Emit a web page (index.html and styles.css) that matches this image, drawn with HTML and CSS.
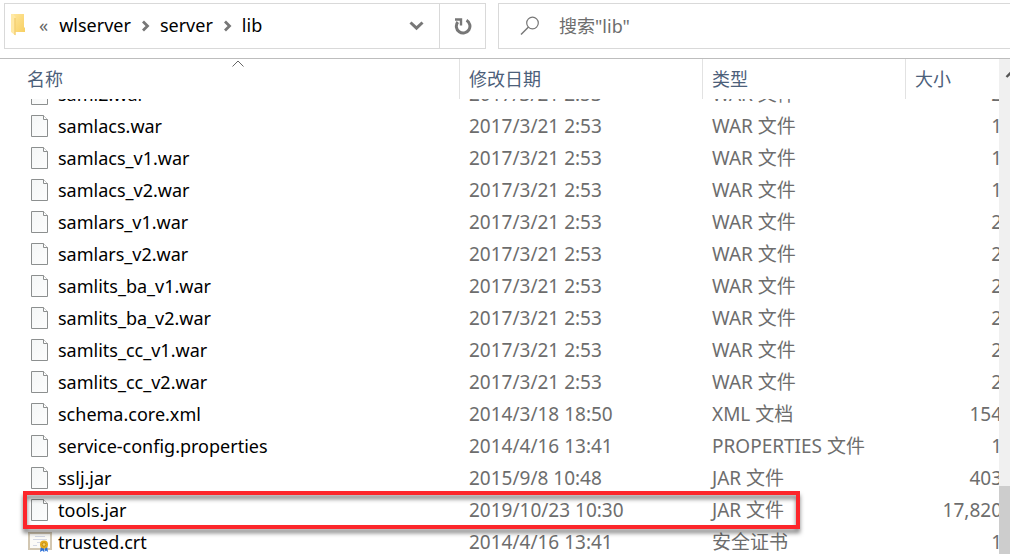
FILE: index.html
```html
<!DOCTYPE html>
<html lang="zh-CN">
<head>
  <meta charset="UTF-8" />
  <meta name="viewport" content="width=device-width, initial-scale=1.0"/>
  <title>lib</title>
  <link rel="stylesheet" href="styles.css">
</head>
<body>
  <!-- shared icons -->
  <svg class="defs" width="0" height="0">
    <defs>
      <linearGradient id="paper" x1="0" y1="0" x2="1" y2="1">
        <stop offset="0" stop-color="#f4f6f6"/>
        <stop offset="1" stop-color="#fdfdfd"/>
      </linearGradient>
      <linearGradient id="gold" x1="0" y1="0" x2="1" y2="1">
        <stop offset="0" stop-color="#ffe69b"/>
        <stop offset="1" stop-color="#f7cf62"/>
      </linearGradient>
    </defs>
    <symbol id="file" viewBox="0 0 17 22">
      <path d="M.5.5h12l4 4v17H.5z" fill="url(#paper)" stroke="#8c8f8f"/>
      <path d="M12.5.5v4h4" fill="#fff" stroke="#8c8f8f"/>
    </symbol>
    <symbol id="chevron" viewBox="0 0 9 12">
      <path d="M2 1.5 6.5 6 2 10.5" fill="none" stroke="#777" stroke-width="2.8"/>
    </symbol>
  </svg>

  <header class="toolbar">
    <div class="address">
      <nav class="crumbs">
        <svg class="folder" width="14" height="22" viewBox="0 0 14 22">
          <path d="M2 0h11v13l1 1v4H4z" fill="url(#gold)"/>
          <path d="M0 0h2l2.500 3v18.500L0 18z" fill="#ffe9a6"/>
          <path d="M4 4v17" stroke="#eec35a" fill="none"/>
        </svg>
        <a class="more" href="#">«</a>
        <a href="#">wlserver</a>
        <svg class="chevron" width="9" height="12"><use href="#chevron"/></svg>
        <a href="#">server</a>
        <svg class="chevron" width="9" height="12"><use href="#chevron"/></svg>
        <a href="#">lib</a>
      </nav>
      <button class="drop" aria-label="以前的位置">
        <svg width="16" height="10" viewBox="0 0 16 10"><path d="M2.500 1.500 8.500 7.200l6-5.700" fill="none" stroke="#777" stroke-width="3"/></svg>
      </button>
      <button class="refresh" aria-label="刷新">
        <svg width="18" height="18" viewBox="0 0 18 18">
          <path d="M12.500 3.300A6.800 6.800 0 1 1 3.800 5" fill="none" stroke="#777" stroke-width="3"/>
          <path d="M1 2.500H7V8.500" fill="none" stroke="#777" stroke-width="2.400"/>
        </svg>
      </button>
    </div>
    <label class="search">
      <svg width="20" height="20" viewBox="0 0 20 20">
        <circle cx="12.500" cy="7" r="5.800" fill="none" stroke="#777" stroke-width="1.200"/>
        <path d="M8.500 11 1 18.500" stroke="#777" stroke-width="1.400"/>
      </svg>
      <input type="text" placeholder='搜索"lib"' aria-label='搜索"lib"'>
    </label>
  </header>

  <main class="pane">
    <table class="files">
      <thead>
        <tr>
          <th>名称
            <svg class="sort" width="12" height="7" viewBox="0 0 12 7"><path d="M.5 6.500 6 1l5.500 5.500" fill="none" stroke="#666"/></svg>
          </th>
          <th>修改日期</th>
          <th>类型</th>
          <th>大小</th>
        </tr>
      </thead>
      <tbody>
        <tr><td><svg class="icon"><use href="#file"/></svg>saml2.war</td><td>2017/3/21 2:53</td><td>WAR 文件</td><td>2</td></tr>
        <tr><td><svg class="icon"><use href="#file"/></svg>samlacs.war</td><td>2017/3/21 2:53</td><td>WAR 文件</td><td>1</td></tr>
        <tr><td><svg class="icon"><use href="#file"/></svg>samlacs_v1.war</td><td>2017/3/21 2:53</td><td>WAR 文件</td><td>1</td></tr>
        <tr><td><svg class="icon"><use href="#file"/></svg>samlacs_v2.war</td><td>2017/3/21 2:53</td><td>WAR 文件</td><td>1</td></tr>
        <tr><td><svg class="icon"><use href="#file"/></svg>samlars_v1.war</td><td>2017/3/21 2:53</td><td>WAR 文件</td><td>2</td></tr>
        <tr><td><svg class="icon"><use href="#file"/></svg>samlars_v2.war</td><td>2017/3/21 2:53</td><td>WAR 文件</td><td>2</td></tr>
        <tr><td><svg class="icon"><use href="#file"/></svg>samlits_ba_v1.war</td><td>2017/3/21 2:53</td><td>WAR 文件</td><td>2</td></tr>
        <tr><td><svg class="icon"><use href="#file"/></svg>samlits_ba_v2.war</td><td>2017/3/21 2:53</td><td>WAR 文件</td><td>2</td></tr>
        <tr><td><svg class="icon"><use href="#file"/></svg>samlits_cc_v1.war</td><td>2017/3/21 2:53</td><td>WAR 文件</td><td>2</td></tr>
        <tr><td><svg class="icon"><use href="#file"/></svg>samlits_cc_v2.war</td><td>2017/3/21 2:53</td><td>WAR 文件</td><td>2</td></tr>
        <tr><td><svg class="icon"><use href="#file"/></svg>schema.core.xml</td><td>2014/3/18 18:50</td><td>XML 文档</td><td>154</td></tr>
        <tr><td><svg class="icon"><use href="#file"/></svg>service-config.properties</td><td>2014/4/16 13:41</td><td>PROPERTIES 文件</td><td>1</td></tr>
        <tr><td><svg class="icon"><use href="#file"/></svg>sslj.jar</td><td>2015/9/8 10:48</td><td>JAR 文件</td><td>403</td></tr>
        <tr class="marked"><td><svg class="icon"><use href="#file"/></svg>tools.jar</td><td>2019/10/23 10:30</td><td>JAR 文件</td><td>17,820</td></tr>
        <tr>
          <td>
            <svg class="icon cert" viewBox="0 0 24 22">
              <path d="M1 2h22v16H1z" fill="#fbfaf7" stroke="#d2c7b2" stroke-width="2"/>
              <path d="M7 5.500h10M5 8.500h14M9 11.500h4M5 14.500h4" stroke="#d3d7e4" fill="none"/>
              <path d="M13 15h3v6l-1.500-1.500L12 21zM17 15h2l1 6-2-1.500-1.500 1.500z" fill="#2c6fd6"/>
              <circle cx="16" cy="13.500" r="4" fill="#e3a91c"/>
              <circle cx="16" cy="13.500" r="1.800" fill="#f6d264" stroke="#b9830d" stroke-width=".8"/>
            </svg>trusted.crt
          </td>
          <td>2014/4/16 13:41</td><td>安全证书</td><td>1</td>
        </tr>
      </tbody>
    </table>
    <div class="scrollbar">
      <svg width="11" height="27" viewBox="0 0 11 27"><path d="M7.500 18 13 12.500l5 5" fill="none" stroke="#555" stroke-width="2.400"/></svg>
      <div class="thumb"></div>
    </div>
  </main>
</body>
</html>
```
FILE: styles.css
```css
:root {
  --line: #d9d9d9;
  --text: #000;
  --muted: #6d6d6d;
  --head: #4c607a;
}

*,
*::after {
  box-sizing: border-box;
}

body {
  margin: 0;
  height: 100vh;
  display: flex;
  flex-direction: column;
  overflow: hidden;
  background: #fff;
  color: var(--text);
  font-family: "Noto Sans", "Noto Sans CJK SC", sans-serif;
  font-size: 18px;
}

.defs {
  position: absolute;
}

.toolbar {
  display: flex;
  flex: none;
  gap: 12px;
  height: 59px;
  padding: 3px 0 9px 4px;
  border-bottom: 1px solid #bdbdbd;
}

.address {
  display: flex;
  flex: none;
  width: 482px;
  height: 46px;
  border: 1px solid var(--line);
}

.crumbs {
  display: flex;
  flex: 1;
  align-items: center;
  padding: 0 0 2px 6px;
}

.crumbs a {
  color: var(--text);
  text-decoration: none;
}

.crumbs .more {
  margin: 0 11px 0 14px;
  color: #666;
}

.chevron {
  margin: 2px 10px 0;
}

button {
  display: flex;
  align-items: center;
  justify-content: center;
  width: 46px;
  padding: 0;
  border: none;
  background: none;
}

.refresh {
  border-left: 1px solid var(--line);
}

.search {
  display: flex;
  flex: 1;
  align-items: center;
  height: 46px;
  padding-left: 21px;
  border: 1px solid var(--line);
  border-right: none;
}

.search input {
  flex: 1;
  min-width: 0;
  margin-left: 19px;
  padding: 0;
  border: none;
  outline: none;
  font: inherit;
}

.search input::placeholder {
  color: var(--muted);
}

.pane {
  display: flex;
  flex: 1;
  min-height: 0;
}

.files {
  display: flex;
  flex: 1;
  flex-direction: column;
  min-width: 0;
  overflow: hidden;
}

.files tr {
  display: grid;
  grid-template-columns: 460px 243px 203px 1fr;
}

.files thead,
.files tbody {
  display: block;
}

th {
  position: relative;
  height: 40px;
  padding: 0 0 0 9px;
  border-right: 1px solid #e2e2e2;
  color: var(--head);
  font-weight: normal;
  line-height: 40px;
  text-align: left;
}

th:first-child {
  padding-left: 27px;
}

th:last-child {
  border-right: none;
}

.sort {
  position: absolute;
  top: 1px;
  left: 232px;
}

tbody {
  flex: 1;
  min-height: 0;
  overflow: hidden;
}

/* list is scrolled part way into the first row */
tbody tr:first-child {
  margin-top: -21px;
}

td {
  height: 32px;
  padding: 0 0 0 9px;
  color: var(--muted);
  font-size: 19px;
  line-height: 32px;
  white-space: nowrap;
}

td:first-child {
  display: flex;
  align-items: center;
  padding-left: 31px;
  color: var(--text);
  font-size: 18px;
}

td:last-child {
  margin-right: -3px;
  padding: 0;
  text-align: right;
}

.icon {
  width: 17px;
  height: 22px;
  margin-right: 10px;
}

.cert {
  width: 24px;
  margin: 0 6px 0 -3px;
}

.marked {
  position: relative;
}

.marked::after {
  content: "";
  position: absolute;
  top: -3px;
  bottom: -3px;
  left: 23px;
  width: 777px;
  border: 4px solid #fc262b;
  filter: drop-shadow(0 4px 2px rgba(0, 0, 0, 0.5));
}

.scrollbar {
  display: flex;
  flex: none;
  flex-direction: column;
  justify-content: space-between;
  width: 11px;
  background: #f0f0f0;
}

.thumb {
  height: 68px;
  background: #cdcdcd;
}
```
